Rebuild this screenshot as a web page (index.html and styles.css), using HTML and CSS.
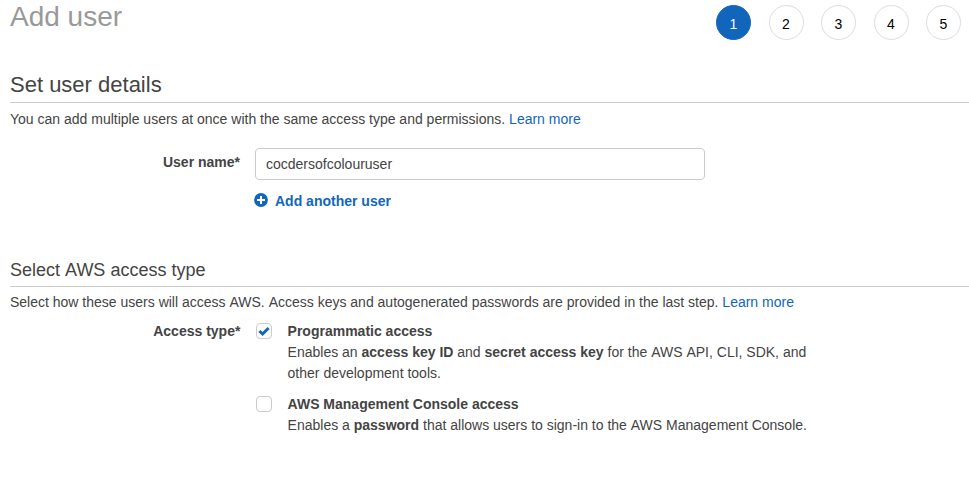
FILE: index.html
```html
<!DOCTYPE html>
<html lang="en">
<head>
<meta charset="utf-8">
<title>Add user</title>
<link rel="stylesheet" href="styles.css">
</head>
<body>
<main class="page">
  <header class="top">
    <h1>Add user</h1>
    <ol class="steps">
      <li class="step active">1</li>
      <li class="step">2</li>
      <li class="step">3</li>
      <li class="step">4</li>
      <li class="step">5</li>
    </ol>
  </header>

  <section class="details">
    <h2>Set user details</h2>
    <p class="intro">You can add multiple users at once with the same access type and permissions. <a href="#">Learn more</a></p>
    <div class="row">
      <label class="label" for="name">User name*</label>
      <div class="field">
        <input class="input" id="name" type="text" value="cocdersofcolouruser">
        <a class="add" href="#"><svg width="14" height="14" viewBox="0 0 14 14"><circle cx="7" cy="7" r="6.9" fill="#1166bb"/><path d="M7 3v8M3 7h8" stroke="#fff" stroke-width="2"/></svg>Add another user</a>
      </div>
    </div>
  </section>

  <section class="access">
    <h3>Select <span class="cap">AWS</span> access type</h3>
    <p class="intro">Select how these users will access <span class="cap">AWS.</span> <span class="cap">Access</span> keys and autogenerated passwords are provided in the last step. <a href="#">Learn more</a></p>
    <div class="row">
      <div class="label">Access type*</div>
      <div class="options">
        <div class="option">
          <span class="box"><svg width="14" height="14" viewBox="0 0 14 14"><path d="M2.4 7L5.6 10L11.6 4" fill="none" stroke="#1166bb" stroke-width="3"/></svg></span>
          <div><strong>Programmatic access</strong><br>Enables an <strong>access key ID</strong> and <strong>secret access key</strong> for the <span class="cap">AWS</span> <span class="cap">API,</span> CLI, SDK, and<br>other development tools.</div>
        </div>
        <div class="option">
          <span class="box"></span>
          <div><strong>AWS Management Console access</strong><br>Enables a <strong>password</strong> that allows users to sign-in to the <span class="cap">AWS</span> Management Console.</div>
        </div>
      </div>
    </div>
  </section>
</main>
</body>
</html>
```
FILE: styles.css
```css
* { box-sizing: border-box; }
body {
  margin: 0;
  background: #fff;
  color: #444;
  font: 14px/21px "Liberation Sans", Arial, sans-serif;
  overflow: hidden;
}
h1, h2, h3, p, ol { margin: 0; padding: 0; font-weight: 400; }
a { color: #1166bb; text-decoration: none; }
/* a hairline margin stops kerning between a space and a capital A */
.cap { margin-left: 0.02px; }
.page { padding-left: 10px; }
.top {
  display: flex;
  justify-content: space-between;
  height: 68px;
  padding-right: 8px;
}
h1 { color: #999; font-size: 28px; line-height: 34px; }
.steps { display: flex; gap: 17.5px; padding-top: 5px; list-style: none; }
.step {
  width: 35px;
  height: 35px;
  border: 1px solid #ddd;
  border-radius: 50%;
  color: #000;
  line-height: 36px;
  text-align: center;
}
.active { background: #1166bb; border-color: #1166bb; color: #fff; }
h2 { height: 35px; border-bottom: 1px solid #ccc; font-size: 22px; line-height: 34px; }
.intro { padding-top: 5px; white-space: nowrap; }
.row { display: flex; gap: 15px; }
.label { width: 230px; text-align: right; font-weight: 700; }
.details { height: 187px; }
.details .intro { padding-top: 6px; }
.details .row { padding-top: 18px; }
.details .label { padding-top: 4px; }
.input {
  display: block;
  width: 450px;
  height: 32px;
  padding: 0 10px;
  border: 1px solid #ccc;
  border-radius: 4px;
  color: #444;
  font: inherit;
}
.add { display: flex; align-items: center; gap: 7px; margin: 11px 0 0 -1px; font-weight: 700; }
.add svg { margin-bottom: 3px; }
h3 { height: 32px; border-bottom: 1px solid #ccc; font-size: 18px; line-height: 30px; }
.access .row { gap: 14.6px; padding-top: 8px; }
.access .label { width: 230.4px; }
.options { display: grid; gap: 10px; }
.option { display: flex; gap: 15.6px; padding-left: 1px; white-space: nowrap; }
.box {
  display: flex;
  width: 16px;
  height: 16px;
  margin-top: 2px;
  border: 1px solid #ccc;
  border-radius: 4px;
}
```
